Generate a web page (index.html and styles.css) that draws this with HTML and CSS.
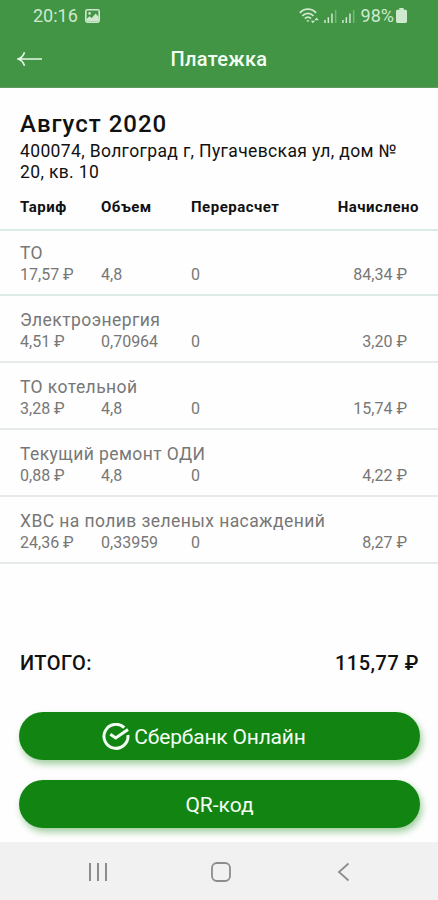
FILE: index.html
```html
<!DOCTYPE html>
<html lang="ru">
<head>
    <meta charset="UTF-8">
    <meta name="viewport" content="width=device-width, initial-scale=1.0">
    <title>Платежка</title>
    <link rel="stylesheet" href="styles.css">
</head>
<body>
    <div class="screen">
        <header class="header">
            <div class="status-bar">
                <span class="time">20:16</span>
                <svg class="photo-icon" width="15" height="14" viewBox="0 0 15 14">
                    <rect x="0.8" y="0.8" width="13.4" height="12.4" rx="1.6" fill="none" stroke="#cfe9cf" stroke-width="1.6"/>
                    <circle cx="4.6" cy="4.4" r="1.3" fill="#cfe9cf"/>
                    <path d="M1.5 12.5V10l3-2.7 2.2 1.8 4-4.6 3 3.6v4.4z" fill="#cfe9cf"/>
                </svg>
                <div class="status-right">
                    <svg width="20" height="16" viewBox="0 0 19 15" fill="none" stroke="#cfe9cf" stroke-width="1.7">
                        <path d="M0.8 4.6C5-.2 12-.2 16.2 4.6M3.2 7.4c3-3.3 7.6-3.3 10.6 0M5.6 10c1.8-1.9 4-1.9 5.8 0"/>
                        <path d="M7 11.6h3L8.5 13.4z" fill="#cfe9cf" stroke="none"/>
                        <path d="M13.200 14.500l-2-2.500h4zM16.700 9l2 2.500h-4z" fill="#cfe9cf" stroke="none"/>
                    </svg>
                    <svg class="signal" width="13" height="13" viewBox="0 0 13 13">
                        <path d="M.2 10h1.5v3H.2zM3.6 7.200h1.500V13H3.600zM7.200 3.600h1.500V13H7.200z" fill="#cfe9cf"/>
                        <path d="M10.900 0h1.500v13h-1.500z" fill="#78b77b"/>
                    </svg>
                    <svg class="signal" width="13" height="13" viewBox="0 0 13 13">
                        <path d="M.2 10h1.500v3H.2zM3.600 7.200h1.500V13H3.600zM7.200 3.600h1.500V13H7.200z" fill="#cfe9cf"/>
                        <path d="M10.900 0h1.500v13h-1.500z" fill="#78b77b"/>
                    </svg>
                    <span class="percent">98%</span>
                    <svg width="11" height="15" viewBox="0 0 10 15" preserveAspectRatio="none">
                        <path d="M3 0h4v1.8h1.6c.8 0 1.4.6 1.4 1.4v10.4c0 .8-.6 1.4-1.4 1.4H1.4C.6 15 0 14.4 0 13.6V3.2c0-.8.6-1.4 1.4-1.4H3z" fill="#cfe9cf"/>
                    </svg>
                </div>
            </div>
            <div class="title-bar">
                <svg class="back" width="26" height="16" viewBox="0 0 26 16" fill="none" stroke="#e8f7e8" stroke-width="1.6">
                    <path d="M25 8H1.5M7.5 1.2C6.5 4.5 4.5 6.8 1.2 8c3.3 1.2 5.3 3.5 6.3 6.8"/>
                </svg>
                <h1>Платежка</h1>
            </div>
        </header>

        <main class="content">
            <div class="bill-info">
                <h2>Август 2020</h2>
                <p>400074, Волгоград г, Пугачевская ул, дом № 20, кв. 10</p>
            </div>
            <div class="columns table-head">
                <span>Тариф</span>
                <span>Объем</span>
                <span>Перерасчет</span>
                <span class="amount">Начислено</span>
            </div>
            <div class="row first">
                <div class="name">ТО</div>
                <div class="columns">
                    <span>17,57 ₽</span>
                    <span>4,8</span>
                    <span>0</span>
                    <span class="amount">84,34 ₽</span>
                </div>
            </div>
            <div class="row">
                <div class="name">Электроэнергия</div>
                <div class="columns">
                    <span>4,51 ₽</span>
                    <span>0,70964</span>
                    <span>0</span>
                    <span class="amount">3,20 ₽</span>
                </div>
            </div>
            <div class="row">
                <div class="name">ТО котельной</div>
                <div class="columns">
                    <span>3,28 ₽</span>
                    <span>4,8</span>
                    <span>0</span>
                    <span class="amount">15,74 ₽</span>
                </div>
            </div>
            <div class="row">
                <div class="name">Текущий ремонт ОДИ</div>
                <div class="columns">
                    <span>0,88 ₽</span>
                    <span>4,8</span>
                    <span>0</span>
                    <span class="amount">4,22 ₽</span>
                </div>
            </div>
            <div class="row">
                <div class="name">ХВС на полив зеленых насаждений</div>
                <div class="columns">
                    <span>24,36 ₽</span>
                    <span>0,33959</span>
                    <span>0</span>
                    <span class="amount">8,27 ₽</span>
                </div>
            </div>
        </main>

        <div class="total">
            <span>ИТОГО:</span>
            <span>115,77 ₽</span>
        </div>

        <div class="actions">
            <button class="btn btn-sber">
                <svg width="28" height="28" viewBox="0 0 28 28" fill="none" stroke="#f4fff4" stroke-width="3">
                    <path d="M22.3 4.7A12 12 0 1 0 25.9 12"/>
                    <path d="M8.3 11.3l5.400 3.700L26 6.400"/>
                </svg>
                <span>Сбербанк Онлайн</span>
            </button>
            <button class="btn">QR-код</button>
        </div>

        <nav class="nav-bar">
            <svg width="20" height="20" viewBox="0 0 20 20" fill="none" stroke="#8c8c8c" stroke-width="2">
                <path d="M2 1v18M10 1v18M18 1v18"/>
            </svg>
            <svg width="20" height="20" viewBox="0 0 20 20" fill="none" stroke="#8c8c8c" stroke-width="1.8">
                <rect x="1" y="1" width="18" height="18" rx="5"/>
            </svg>
            <svg width="20" height="20" viewBox="0 0 20 20" fill="none" stroke="#8c8c8c" stroke-width="1.8">
                <path d="M14.5 1.5L5 10l9.5 8.500"/>
            </svg>
        </nav>
    </div>
</body>
</html>
```
FILE: styles.css
```css
* {
    box-sizing: border-box;
}

body {
    margin: 0;
    background-color: #fefefe;
    font-family: Roboto, "Noto Sans", sans-serif;
    color: #111;
}

h1,
h2,
p {
    margin: 0;
}

.screen {
    display: flex;
    flex-direction: column;
    height: 900px;
}

.header {
    height: 88px;
    background-color: #419544;
    border-bottom: 1px solid #5f9c62;
}

.status-bar {
    display: flex;
    align-items: center;
    height: 31px;
    padding: 0 31px 0 33px;
    color: #cfe9cf;
    font-size: 18px;
    line-height: 31px;
}

.photo-icon {
    margin-left: 7px;
}

.status-right {
    display: flex;
    align-items: center;
    margin-left: auto;
}

.signal {
    margin-left: 5px;
    margin-top: 2px;
}

.percent {
    margin: 0 2px 0 6px;
}

.title-bar {
    display: grid;
    grid-template-columns: 26px 1fr 26px;
    align-items: center;
    height: 56px;
    padding: 0 17px;
}

.title-bar h1 {
    color: #f4fff4;
    font-size: 20px;
    font-weight: 500;
    letter-spacing: 0.3px;
    text-align: center;
}

.bill-info {
    padding: 22px 20px 0;
}

.bill-info h2 {
    font-size: 24px;
    font-weight: 500;
    line-height: 28px;
    letter-spacing: 1px;
}

.bill-info p {
    margin-top: 3px;
    font-size: 17.5px;
    line-height: 21px;
    letter-spacing: 0.36px;
}

.columns {
    display: grid;
    grid-template-columns: 81px 90px 1fr auto;
    padding: 0 31px 0 20px;
}

.amount {
    text-align: right;
}

.table-head {
    height: 48px;
    padding: 15px 19px 0 20px;
    border-bottom: 2px solid #dcebe5;
    font-size: 15px;
    font-weight: 700;
    line-height: 18px;
    letter-spacing: 0.5px;
}

.row {
    height: 67px;
    padding-top: 14px;
    border-bottom: 2px solid #e6ebe8;
    color: #777;
}

.row.first {
    height: 65px;
    padding-top: 12px;
    border-bottom-color: #dcebe5;
}

.row .name {
    padding-left: 20px;
    font-size: 17.5px;
    line-height: 21px;
    letter-spacing: 0.42px;
}

.row .columns {
    font-size: 16px;
    line-height: 21px;
}

.total {
    display: flex;
    justify-content: space-between;
    margin-top: auto;
    padding: 0 19px 0 20px;
    font-size: 20px;
    font-weight: 500;
    line-height: 24px;
    letter-spacing: 0.5px;
}

.actions {
    display: flex;
    flex-direction: column;
    gap: 20px;
    padding: 37px 18px 14px 19px;
}

.btn {
    display: flex;
    align-items: center;
    justify-content: center;
    gap: 4px;
    height: 48px;
    padding: 1px 0 0;
    border: none;
    border-radius: 24px;
    background-color: #128412;
    box-shadow: 2px 4px 7px rgba(18, 132, 18, 0.4);
    color: #f4fff4;
    font-family: inherit;
    font-size: 21px;
    cursor: pointer;
}

.btn-sber {
    padding-right: 31px;
    letter-spacing: -0.2px;
}

.nav-bar {
    display: flex;
    align-items: center;
    justify-content: space-between;
    height: 58px;
    padding: 2px 84px 0 88px;
    background-color: #f1f1f1;
}
```
